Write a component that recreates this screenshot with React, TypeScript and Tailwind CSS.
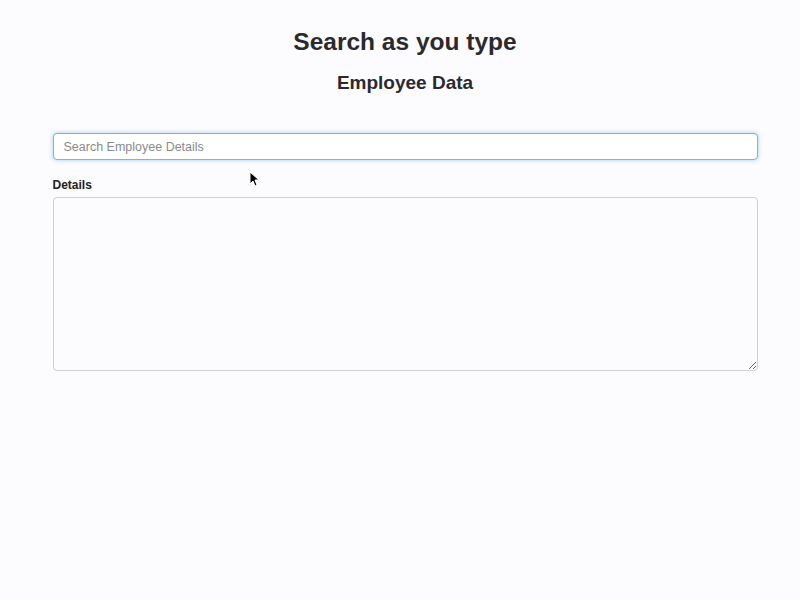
export default function App() {
    return (
        <div
            className="relative min-h-[600px] w-full bg-[#fcfbfd] text-[#2a2a2e]"
            style={{ fontFamily: '"Liberation Sans", Arial, sans-serif' }}
        >
            <div className="mx-auto w-[705px] translate-x-[5px] pt-[27px]">
                <h1 className="text-center text-[24.5px] font-bold leading-[30px]">Search as you type</h1>
                <h2 className="mt-[15px] text-center text-[19px] font-bold leading-[22px]">Employee Data</h2>

                <div className="mt-[39px]">
                    <input
                        type="text"
                        placeholder="Search Employee Details"
                        className="h-[27px] w-full rounded-[4px] border border-[#7fb1e6] bg-white px-[10px] text-[12.5px] text-[#555] shadow-[0_0_4px_rgba(102,175,233,0.6)] outline-none placeholder:text-[#8a8a8a]"
                    />
                </div>

                <div className="mt-[18px]">
                    <label className="block text-[12px] font-bold leading-[14px] text-[#222]">Details</label>
                    <textarea className="mt-[5px] block h-[174px] w-full resize-y rounded-[4px] border border-[#cfcfcf] bg-[#fcfbfd] p-2 text-[12px] outline-none" />
                </div>
            </div>

            {/* mouse pointer */}
            <svg className="absolute left-[249px] top-[171px]" width="10" height="16" viewBox="0 0 10 16">
                <path d="M1 1 L1 13 L4 10 L6 15 L8 14 L6 9 L10 9 Z" fill="#000" stroke="#fff" strokeWidth="1" />
            </svg>
        </div>
    );
}
